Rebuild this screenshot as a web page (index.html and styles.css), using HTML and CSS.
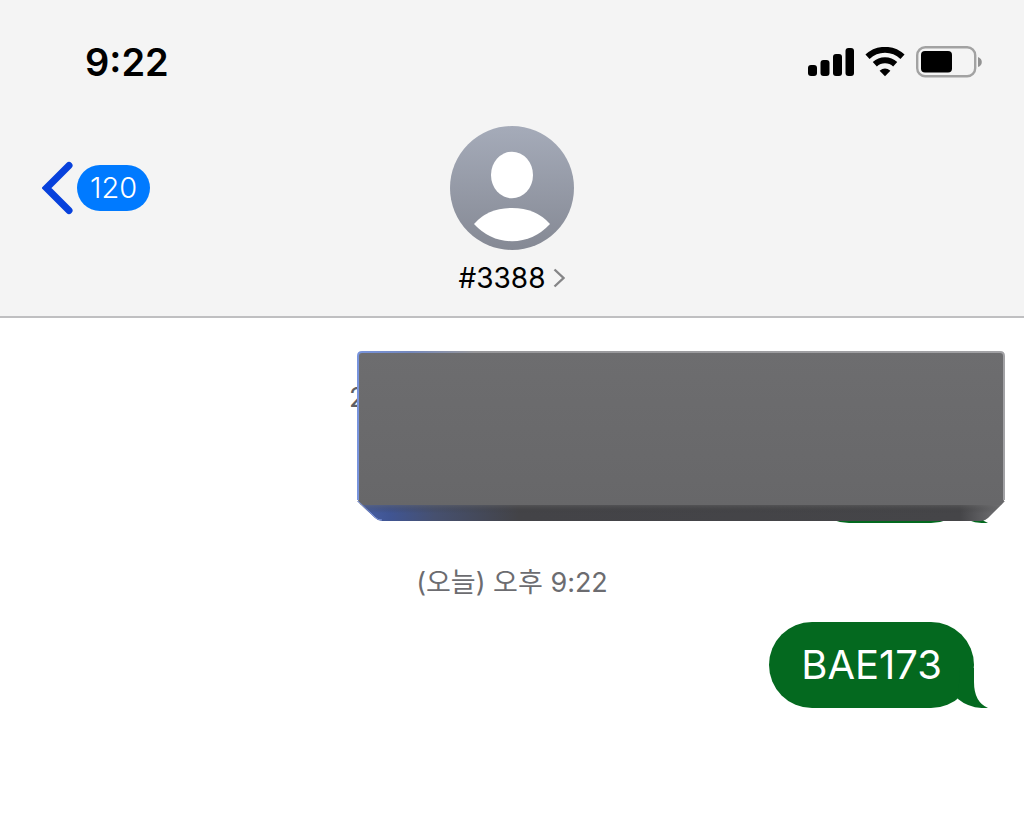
FILE: index.html
```html
<!DOCTYPE html>
<html lang="ko">
<head>
<meta charset="utf-8">
<meta name="viewport" content="width=device-width, initial-scale=1">
<title>#3388</title>
<link rel="stylesheet" href="styles.css">
</head>
<body>
<header class="header">
  <div class="status">
    <time class="clock">9:22</time>
    <div class="indicators">
      <svg class="signal" width="46" height="28" viewBox="0 0 46 28" aria-hidden="true">
        <rect x="0" y="17" width="9" height="11" rx="3"/>
        <rect x="12.5" y="12" width="9" height="16" rx="3"/>
        <rect x="25" y="6" width="9" height="22" rx="3"/>
        <rect x="37.5" y="0" width="8.5" height="28" rx="3"/>
      </svg>
      <svg class="wifi" width="40" height="30" viewBox="0 0 40 30" aria-hidden="true">
        <path class="arc" d="M2.5 9.8A25.5 25.5 0 0 1 37.5 9.8"/>
        <path class="arc" d="M9.8 17.3A15 15 0 0 1 30.2 17.3"/>
        <path d="M20 29.2L14.6 23.8Q20 19.2 25.4 23.8Z"/>
      </svg>
      <svg class="battery" width="66" height="32" viewBox="0 0 66 32" aria-hidden="true">
        <rect class="shell" x="1.2" y="1.2" width="58" height="29" rx="8"/>
        <rect x="5" y="5" width="31" height="21.5" rx="4"/>
        <path class="cap" d="M62 11Q65.8 12.5 65.8 16T62 21Z"/>
      </svg>
    </div>
  </div>
  <div class="nav">
    <button class="back" type="button" aria-label="뒤로, 120">
      <svg width="32" height="54" viewBox="0 0 32 54" aria-hidden="true"><path d="M27 4.5L4.500 27L27 49.5"/></svg>
      <span class="count">120</span>
    </button>
    <button class="contact" type="button">
      <svg class="avatar" width="124" height="124" viewBox="0 0 124 124" aria-hidden="true">
        <defs><linearGradient id="av" x1="0" y1="0" x2="0" y2="1"><stop offset="0" stop-color="#a5abb9"/><stop offset="1" stop-color="#858994"/></linearGradient></defs>
        <circle cx="62" cy="62" r="62" fill="url(#av)"/>
        <ellipse cx="62" cy="49" rx="21" ry="23.3" fill="#fff"/>
        <path d="M24 98Q38 82 62 82T100 98Q84 115.200 62 115.200T24 98Z" fill="#fff"/>
      </svg>
      <span class="name">#3388
        <svg width="12" height="20" viewBox="0 0 12 20" aria-hidden="true"><path d="M1.5 1.5L10.5 10L1.5 18.5"/></svg>
      </span>
    </button>
  </div>
</header>
<main class="thread">
  <section class="covered">
    <p class="cut-date">2</p>
    <div class="bubble bubble-old">
      <svg class="tail" width="30" height="40" viewBox="0 0 30 40" aria-hidden="true"><path d="M16 0V14Q16 34 30 40Q12 41 0 31L2 0Z"/></svg>
    </div>
    <svg class="block" viewBox="0 0 648 170" preserveAspectRatio="none" aria-hidden="true">
      <defs>
        <linearGradient id="face" x1="0" y1="0" x2="0" y2="1"><stop offset="0" stop-color="#6d6d6f"/><stop offset="1" stop-color="#676769"/></linearGradient>
        <linearGradient id="under" x1="0" y1="0" x2="1" y2="0"><stop offset="0" stop-color="#4961a6"/><stop offset=".05" stop-color="#405593"/><stop offset=".12" stop-color="#46506f"/><stop offset=".25" stop-color="#434347"/><stop offset=".93" stop-color="#454548"/><stop offset="1" stop-color="#77777a"/></linearGradient>
        <linearGradient id="shade" x1="0" y1="0" x2="0" y2="1"><stop offset="0" stop-color="#666" stop-opacity=".45"/><stop offset="1" stop-color="#333" stop-opacity="0"/></linearGradient>
        <linearGradient id="rim" x1="0" y1="0" x2="1" y2="0"><stop offset="0" stop-color="#7894dd"/><stop offset=".08" stop-color="#7488bd"/><stop offset=".18" stop-color="#98989b"/><stop offset="1" stop-color="#a2a2a5"/></linearGradient>
      </defs>
      <path d="M0 150L18 167Q21 170 25 170H624Q628 170 631 167L648 150Z" fill="url(#under)"/>
      <path d="M4 154H644L636 162H12Z" fill="url(#shade)"/>
      <path d="M1 149V5Q1 1 5 1H643Q647 1 647 5V149Q647 151 644 154H4Q1 151 1 149Z" fill="url(#face)"/>
      <path d="M1 149V5Q1 1 5 1H643Q647 1 647 5V149" fill="none" stroke="url(#rim)" stroke-width="2"/>
      <path d="M1 150L19 167Q21 169 25 169" fill="none" stroke="#7f96dc"/>
    </svg>
  </section>
  <p class="date">(오늘) 오후 9:22</p>
  <div class="bubble">BAE173
    <svg class="tail" width="30" height="40" viewBox="0 0 30 40" aria-hidden="true"><path d="M16 0V14Q16 34 30 40Q12 41 0 31L2 0Z"/></svg>
  </div>
</main>
</body>
</html>
```
FILE: styles.css
```css
* { box-sizing: border-box; }
body {
  margin: 0;
  background: #fff;
  color: #000;
  font-family: Inter, "Noto Sans CJK KR", sans-serif;
}
p { margin: 0; }
svg { display: block; }
button {
  padding: 0;
  border: 0;
  background: none;
  color: inherit;
  font: inherit;
  cursor: pointer;
}
.header {
  background: #f4f4f4;
  border-bottom: 2px solid #bfbfc1;
  padding: 38px 42px 20px;
}
.status {
  display: flex;
  align-items: center;
  justify-content: space-between;
  padding-left: 43px;
}
.clock {
  font-size: 38px;
  line-height: 48px;
  font-weight: 600;
}
.indicators {
  display: flex;
  align-items: center;
  gap: 11px;
}
.wifi .arc { fill: none; stroke: #000; stroke-width: 6; }
.battery .shell { fill: none; stroke: #a2a2a2; stroke-width: 2.4; }
.battery .cap { fill: #929292; }
.nav {
  display: grid;
  grid-template-columns: 1fr auto 1fr;
  align-items: start;
  padding-top: 40px;
}
.back {
  display: flex;
  align-items: center;
  justify-self: start;
  gap: 3px;
  margin-top: 35px;
}
.back path {
  fill: none;
  stroke: #0741dc;
  stroke-width: 7;
  stroke-linecap: round;
}
.count {
  padding: 0 13px;
  border-radius: 23px;
  background: #007aff;
  color: #fff;
  font-size: 29px;
  font-weight: 300;
  line-height: 46px;
}
.contact {
  display: flex;
  flex-direction: column;
  align-items: center;
  gap: 10px;
}
.name {
  display: flex;
  align-items: center;
  gap: 8px;
  font-size: 28px;
  line-height: 36px;
}
.name path { fill: none; stroke: #858587; stroke-width: 2.4; }
.thread {
  display: flex;
  flex-direction: column;
  align-items: stretch;
  padding: 33px 50px 40px;
}
.covered {
  position: relative;
  padding-top: 31px;
}
.cut-date {
  padding-left: 299px;
  color: #5f5f63;
  font-size: 27px;
  line-height: 32px;
}
.bubble {
  position: relative;
  width: fit-content;
  margin-left: auto;
  padding: 0 32px;
  border-radius: 43px;
  background: #04691f;
  color: #fff;
  font-size: 40px;
  line-height: 86px;
}
.bubble-old {
  width: 168px;
  height: 86px;
  margin-top: 23px;
}
.tail {
  position: absolute;
  right: -14px;
  bottom: 0;
  fill: #04691f;
}
.block {
  position: absolute;
  top: 0;
  right: -31px;
  left: 307px;
  width: calc(100% - 276px);
  height: 170px;
}
.date {
  padding: 43px 0 22px;
  color: #6c6c70;
  font-size: 27px;
  line-height: 34px;
  text-align: center;
}
```
